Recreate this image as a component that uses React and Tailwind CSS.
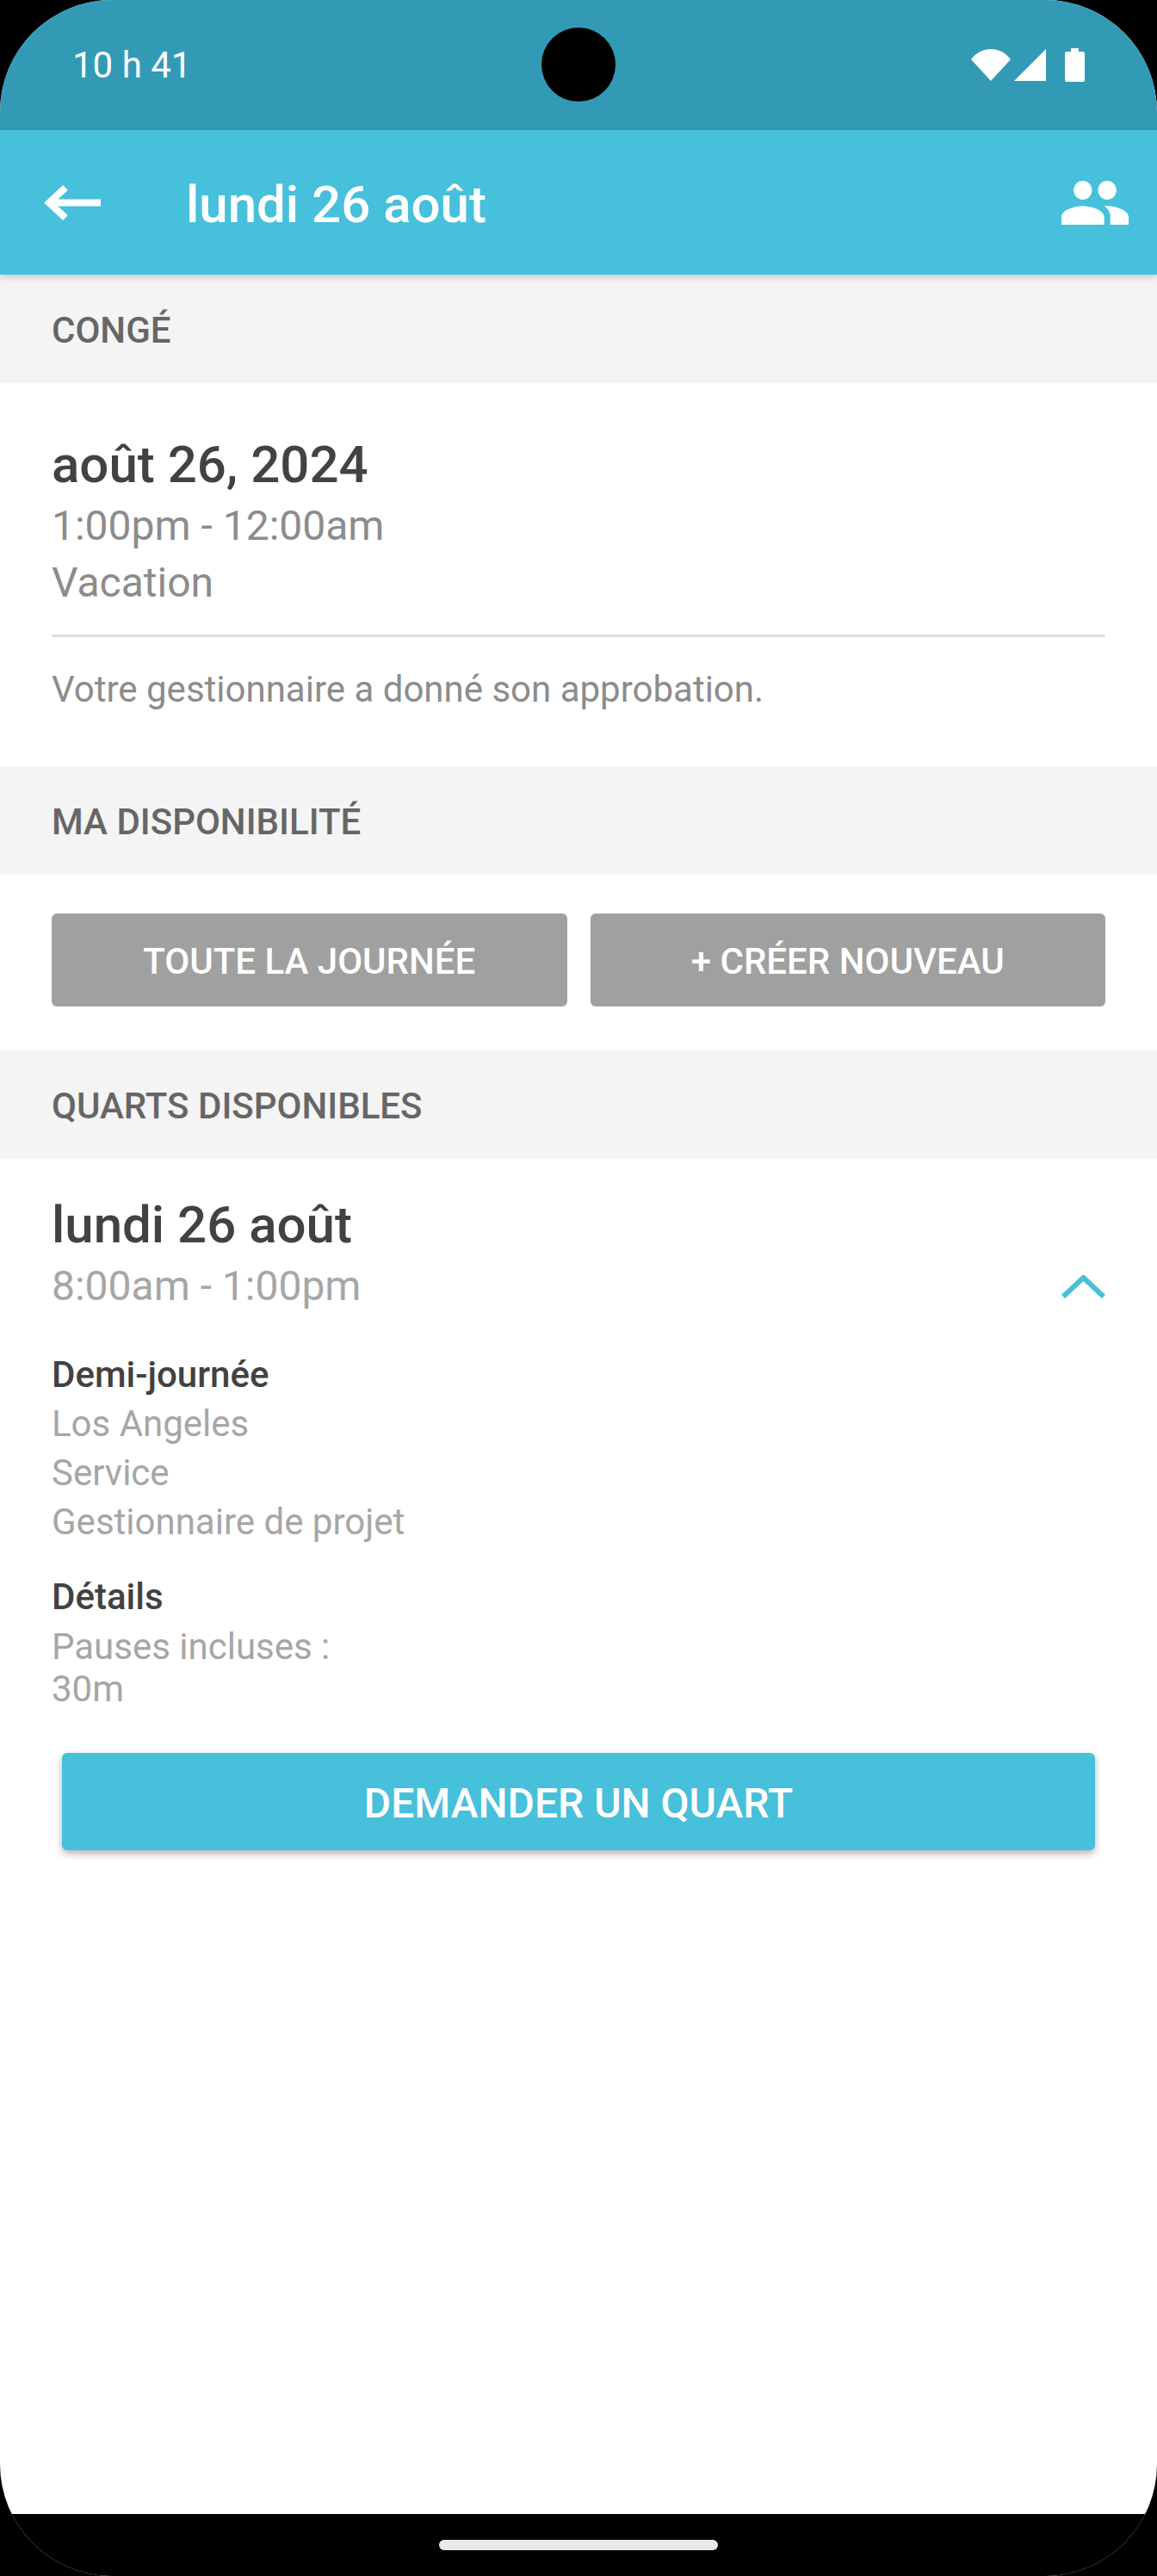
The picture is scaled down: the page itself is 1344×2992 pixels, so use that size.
import React from 'react'

function SectionHeader({ children }) {
  return (
    <div className="h-[126px] bg-[#f4f4f4] flex items-center px-[60px] pt-[3px] text-[42px] font-medium text-[#666666]">
      {children}
    </div>
  )
}

function GreyButton({ children }) {
  return (
    <button className="flex-1 h-[108px] pt-[3px] rounded-[6px] bg-[#a0a0a0] text-white text-[42px] font-medium">
      {children}
    </button>
  )
}

export default function App() {
  return (
    <div className="relative w-[1344px] h-[2992px] bg-black overflow-hidden font-['Roboto',sans-serif]">
      <div className="h-full rounded-[130px] overflow-hidden bg-white flex flex-col">
        {/* barre d'état */}
        <div className="h-[151px] shrink-0 bg-[#329ab5] flex items-center justify-between pl-[84px] pr-[84px] text-white">
          <span className="text-[42px]">10 h 41</span>
          <div className="flex items-center">
            <svg width="46" height="37" viewBox="0 0 46 37" fill="white">
              <path d="M0 12C6 4 14 0 23 0s17 4 23 12L23 37z" />
            </svg>
            <svg width="37" height="37" viewBox="0 0 37 37" fill="white" className="ml-[4px]">
              <path d="M37 0v37H0z" />
            </svg>
            <svg width="23" height="39" viewBox="0 0 23 39" fill="white" className="ml-[22px]">
              <path d="M7 0h9v4h5a2 2 0 0 1 2 2v31a2 2 0 0 1-2 2H2a2 2 0 0 1-2-2V6a2 2 0 0 1 2-2h5z" />
            </svg>
          </div>
        </div>

        {/* barre du haut */}
        <div className="relative z-10 h-[168px] shrink-0 bg-[#47c0db] shadow-[0_3px_8px_rgba(0,0,0,0.18)] flex items-center pl-[51px] pr-[33px] text-white">
          <svg width="66" height="41" viewBox="0 0 66 41" fill="none" stroke="white" strokeWidth="8">
            <path d="M66 20.5H6M25 3 6 20.5 25 38" />
          </svg>
          <span className="ml-[99px] pt-[5px] text-[60px] font-medium leading-none">lundi 26 août</span>
          <svg width="78" height="51" viewBox="1 5 22 14" preserveAspectRatio="none" fill="white" className="ml-auto">
            <path d="M16 11c1.66 0 2.99-1.34 2.99-3S17.66 5 16 5c-1.66 0-3 1.34-3 3s1.34 3 3 3zm-8 0c1.66 0 2.99-1.34 2.99-3S9.66 5 8 5C6.34 5 5 6.34 5 8s1.34 3 3 3zm0 2c-2.33 0-7 1.17-7 3.5V19h14v-2.5c0-2.33-4.67-3.5-7-3.5zm8 0c-.29 0-.62.02-.97.05 1.16.84 1.97 1.97 1.97 3.45V19h6v-2.5c0-2.33-4.67-3.5-7-3.5z" />
          </svg>
        </div>

        <SectionHeader>CONGÉ</SectionHeader>

        <div className="px-[60px] pt-[60px] pb-[61px]">
          <div className="text-[60px] font-medium leading-[70px] text-[#424242]">août 26, 2024</div>
          <div className="mt-[3px] text-[48px] leading-[66px] text-[#8c8c8c]">1:00pm - 12:00am</div>
          <div className="mt-[1px] text-[48px] leading-[63px] text-[#8c8c8c]">Vacation</div>
          <div className="mt-[29px] h-[3px] bg-[#e0e0e0]" />
          <div className="mt-[33px] text-[42px] leading-[56px] text-[#8c8c8c]">Votre gestionnaire a donné son approbation.</div>
        </div>

        <SectionHeader>MA DISPONIBILITÉ</SectionHeader>

        <div className="flex gap-[27px] px-[60px] pt-[45px] pb-[51px]">
          <GreyButton>TOUTE LA JOURNÉE</GreyButton>
          <GreyButton>+ CRÉER NOUVEAU</GreyButton>
        </div>

        <SectionHeader>QUARTS DISPONIBLES</SectionHeader>

        <div className="px-[60px] pt-[42px]">
          <div className="text-[60px] font-medium leading-[70px] text-[#424242]">lundi 26 août</div>
          <div className="mt-[1px] flex items-center justify-between">
            <span className="text-[48px] leading-[70px] text-[#a6a6a6]">8:00am - 1:00pm</span>
            <svg width="51" height="27" viewBox="0 0 51 27" fill="none" stroke="#47c0db" strokeWidth="6">
              <path d="M2 25 25.5 3 49 25" />
            </svg>
          </div>

          <div className="mt-[40px] text-[42px] font-medium leading-[56px] text-[#424242]">Demi-journée</div>
          <div className="text-[42px] leading-[57px] text-[#a6a6a6]">Los Angeles</div>
          <div className="text-[42px] leading-[57px] text-[#a6a6a6]">Service</div>
          <div className="text-[42px] leading-[57px] text-[#a6a6a6]">Gestionnaire de projet</div>

          <div className="mt-[31px] text-[42px] font-medium leading-[56px] text-[#424242]">Détails</div>
          <div className="mt-[5px] text-[42px] leading-[49px] text-[#a6a6a6]">Pauses incluses :</div>
          <div className="text-[42px] leading-[49px] text-[#a6a6a6]">30m</div>

          <button className="mt-[50px] ml-[12px] w-[1200px] h-[113px] pt-[4px] rounded-[6px] bg-[#47c0db] shadow-[0_4px_8px_rgba(0,0,0,0.3)] text-white text-[48px] font-medium">
            DEMANDER UN QUART
          </button>
        </div>

        <div className="flex-1" />

        {/* barre de navigation */}
        <div className="h-[72px] shrink-0 bg-black flex justify-center pt-[30px]">
          <div className="w-[324px] h-[12px] rounded-full bg-[#e9e9e9]" />
        </div>
      </div>

      {/* caméra */}
      <div className="absolute left-[629px] top-[32px] w-[86px] h-[86px] rounded-full bg-black" />
    </div>
  )
}
